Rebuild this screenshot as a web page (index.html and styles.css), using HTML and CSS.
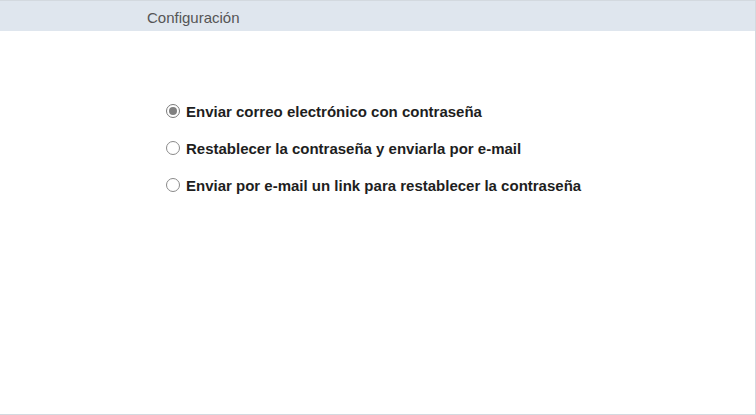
FILE: index.html
```html
<!DOCTYPE html>
<html lang="es">
<head>
    <meta charset="UTF-8">
    <meta name="viewport" content="width=device-width, initial-scale=1.0">
    <title>Configuración</title>
    <link rel="stylesheet" href="styles.css">
</head>
<body>

    <div class="panel">
        <div class="panel-header">Configuración</div>

        <div class="options">
            <label class="option">
                <span class="radio checked"></span>
                Enviar correo electrónico con contraseña
            </label>
            <label class="option">
                <span class="radio"></span>
                Restablecer la contraseña y enviarla por e-mail
            </label>
            <label class="option">
                <span class="radio"></span>
                Enviar por e-mail un link para restablecer la contraseña
            </label>
        </div>
    </div>

</body>
</html>
```

FILE: styles.css
```css
body {
    margin: 0;
    font-family: "Liberation Sans", Arial, sans-serif;
    background-color: #fff;
}

.panel {
    height: 415px;
    box-sizing: border-box;
    border-top: 1px solid #d3d9df;
    border-right: 1px solid #d3d9df;
    border-bottom: 1px solid #d3d9df;
}

.panel-header {
    height: 30px;
    line-height: 33px;
    padding-left: 147px;
    font-size: 15px;
    color: #555;
    background-color: #dfe6ee;
}

.options {
    display: flex;
    flex-direction: column;
    gap: 19px;
    padding: 71px 0 0 166px;
}

.option {
    display: flex;
    align-items: center;
    gap: 6px;
    height: 18px;
    font-size: 15px;
    font-weight: bold;
    color: #1e1e1e;
}

.radio {
    width: 14px;
    height: 14px;
    border: 1px solid #8a8a8a;
    border-radius: 50%;
    box-sizing: border-box;
    display: flex;
    align-items: center;
    justify-content: center;
    background-color: #fff;
}

.radio.checked {
    border-color: #7a7a7a;
}

.radio.checked::after {
    content: "";
    width: 8px;
    height: 8px;
    border-radius: 50%;
    background-color: #808080;
}
```
